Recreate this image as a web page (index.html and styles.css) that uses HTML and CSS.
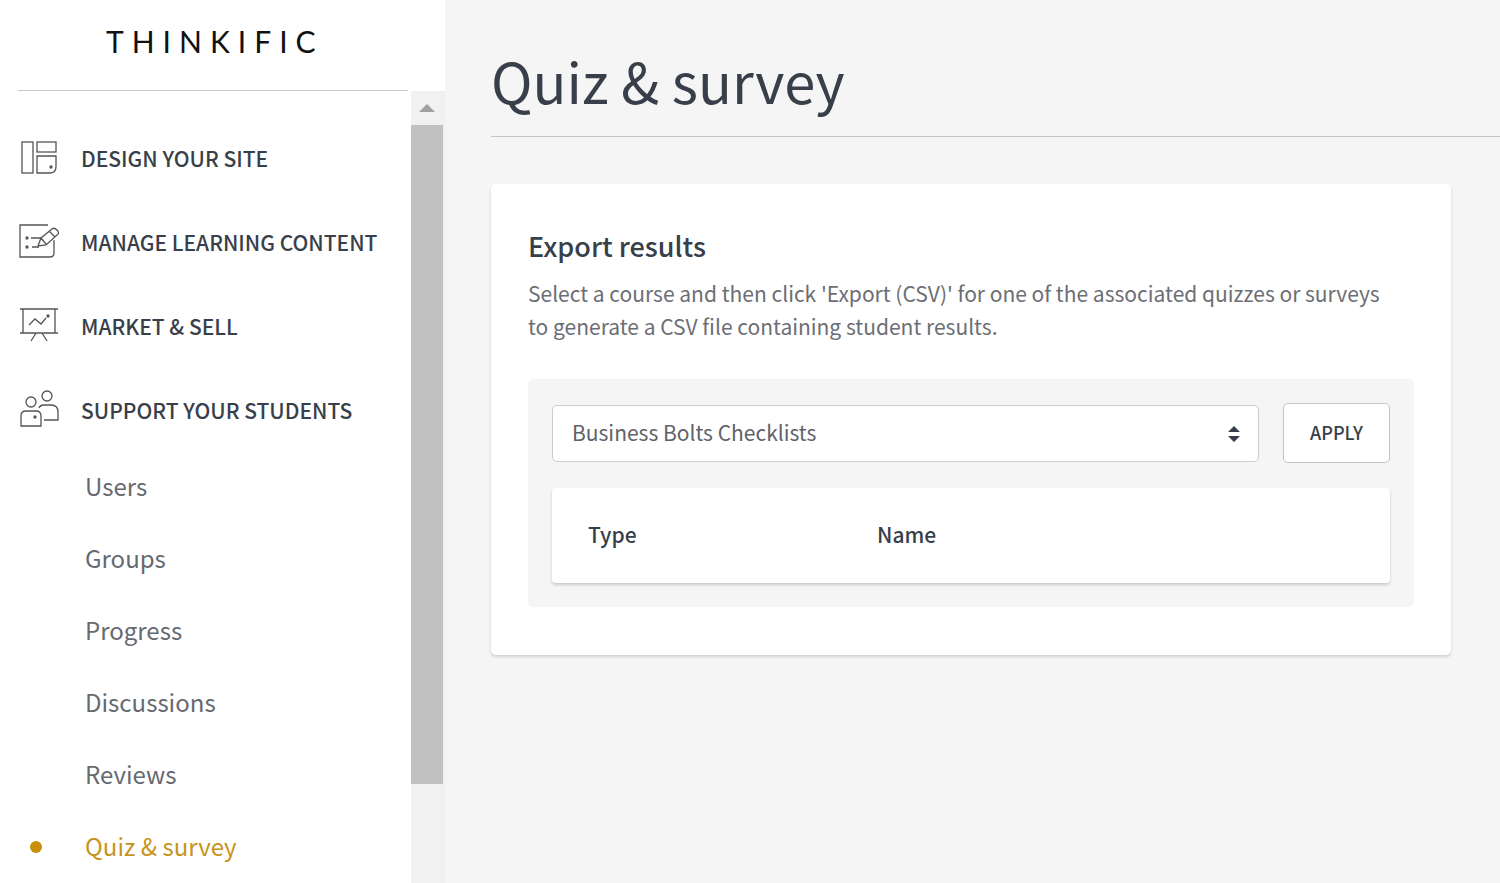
FILE: index.html
```html
<!DOCTYPE html>
<html lang="en">
<head>
    <meta charset="utf-8">
    <title>Quiz &amp; survey</title>
    <link rel="stylesheet" href="styles.css">
</head>
<body>
    <aside class="sidebar">
        <div class="logo">THINKIFIC</div>
        <div class="sidebar-body">
            <nav class="menu">
                <a class="section" href="#design">
                    <svg class="icon" viewBox="0 0 42 42">
                        <rect x="4" y="5" width="11" height="31"/>
                        <rect x="19" y="5" width="19" height="10"/>
                        <path d="M19 19h19v10.500q0 6.500-6.500 6.500H19z"/>
                        <circle class="dot" cx="33" cy="30" r="1"/>
                    </svg>
                    Design your site
                </a>
                <a class="section" href="#manage">
                    <svg class="icon" viewBox="0 0 42 42">
                        <path d="M30 4H2v32h30q4 0 4-4V19"/>
                        <path d="M13 17h11M14 26h7"/>
                        <path d="M20 25l3-8L34 8q2-2 5 1t0 5L28 24l-8 1zM31 10l6 6M23 17l5 6"/>
                        <circle class="dot" cx="9" cy="17" r="1"/>
                        <circle class="dot" cx="9" cy="26" r="1"/>
                    </svg>
                    Manage learning content
                </a>
                <a class="section" href="#market">
                    <svg class="icon" viewBox="0 0 42 42">
                        <path d="M2 4h38M2 28h38M5 4v24M37 4v24M18 28l-5 8M24 28l5 8"/>
                        <path d="M11 20l6-6 6 5 5-6"/>
                        <circle class="dot" cx="30" cy="11" r="1"/>
                    </svg>
                    Market &amp; sell
                </a>
                <a class="section" href="#support">
                    <svg class="icon" viewBox="0 0 42 42">
                        <circle cx="13" cy="13" r="5"/>
                        <circle cx="29" cy="7" r="5"/>
                        <path d="M3 37V27q0-5 5-5h10q5 0 5 5v10z"/>
                        <path d="M21 19q1-3 5-3h7q7 0 7 7v8H26"/>
                        <circle class="dot" cx="17" cy="28" r="1"/>
                    </svg>
                    Support your students
                </a>
                <ul class="submenu">
                    <li><a href="#users">Users</a></li>
                    <li><a href="#groups">Groups</a></li>
                    <li><a href="#progress">Progress</a></li>
                    <li><a href="#discussions">Discussions</a></li>
                    <li><a href="#reviews">Reviews</a></li>
                    <li><a class="active" href="#quiz">Quiz &amp; survey</a></li>
                </ul>
            </nav>
            <div class="scrollbar">
                <div class="scroll-arrow"></div>
                <div class="scroll-thumb"></div>
            </div>
        </div>
    </aside>

    <main class="content">
        <h1>Quiz &amp; survey</h1>

        <section class="card">
            <h2>Export results</h2>
            <p>Select a course and then click 'Export (CSV)' for one of the associated quizzes or surveys to generate a CSV file containing student results.</p>

            <div class="panel">
                <form class="filter">
                    <div class="select-wrap">
                        <select id="course" aria-label="Course">
                            <option>Business Bolts Checklists</option>
                        </select>
                        <svg class="caret" viewBox="0 0 12 16">
                            <path d="M6 0l6 6H0zM6 16l6-6H0z"/>
                        </svg>
                    </div>
                    <button type="button">Apply</button>
                </form>

                <table>
                    <thead>
                        <tr>
                            <th class="col-type">Type</th>
                            <th>Name</th>
                        </tr>
                    </thead>
                </table>
            </div>
        </section>
    </main>
</body>
</html>
```
FILE: styles.css
```css
* {
    box-sizing: border-box;
}
body {
    margin: 0;
    display: flex;
    height: 100vh;
    overflow: hidden;
    font-family: "Noto Sans CJK SC", "Open Sans", sans-serif;
    background: #f5f5f5;
    color: #383f4a;
}
a {
    color: inherit;
    text-decoration: none;
}

/* sidebar */
.sidebar {
    flex: 0 0 445px;
    display: flex;
    flex-direction: column;
    background: #fff;
}
.logo {
    margin: 0 37px 0 18px;
    height: 91px;
    padding-left: 88px;
    border-bottom: 1px solid #c8c8c8;
    font-family: Lato, sans-serif;
    font-size: 30px;
    line-height: 82px;
    letter-spacing: 8px;
    color: #111;
}
.sidebar-body {
    flex: 1;
    display: flex;
    min-height: 0;
}
.menu {
    flex: 1;
    padding: 25px 0 0 18px;
    overflow: hidden;
}
.section {
    display: flex;
    align-items: center;
    gap: 21px;
    height: 84px;
    font-size: 21px;
    font-weight: 500;
    text-transform: uppercase;
    white-space: nowrap;
}
.icon {
    width: 42px;
    height: 42px;
    fill: none;
    stroke: #555;
    stroke-width: 1.3;
}
.dot {
    fill: #444;
}
.submenu {
    list-style: none;
    margin: -2px 0 0;
    padding: 0;
}
.submenu a {
    position: relative;
    display: block;
    padding-left: 67px;
    font-size: 24px;
    line-height: 72px;
    color: #666a70;
}
.submenu .active {
    color: #c7941c;
}
.submenu .active::before {
    content: "";
    position: absolute;
    left: 12px;
    top: 31px;
    width: 12px;
    height: 12px;
    border-radius: 50%;
    background: #c98f0c;
}
.scrollbar {
    flex: 0 0 34px;
    display: flex;
    flex-direction: column;
    padding-right: 2px;
    background: #f1f1f1;
}
.scroll-arrow {
    flex: 0 0 34px;
    display: flex;
    align-items: center;
    justify-content: center;
}
.scroll-arrow::before {
    content: "";
    border: 8px solid transparent;
    border-top: 0;
    border-bottom-color: #a0a0a0;
}
.scroll-thumb {
    height: 87%;
    margin-bottom: 99px;
    background: #c1c1c1;
}

/* page */
.content {
    flex: 1;
    padding-left: 46px;
}
h1 {
    margin: 0 0 47px;
    padding: 44px 0 20px;
    border-bottom: 1px solid #c4c4c4;
    font-size: 56px;
    font-weight: 400;
    line-height: 72px;
}
.card {
    margin-right: 49px;
    padding: 44px 37px 48px;
    background: #fff;
    border-radius: 5px;
    box-shadow: 0 2px 3px rgba(0, 0, 0, 0.15);
}
h2 {
    margin: 0 0 13px;
    font-size: 27px;
    font-weight: 500;
    line-height: 36px;
}
p {
    margin: 0;
    padding-right: 12px;
    font-size: 21px;
    line-height: 33px;
    color: #6b6e74;
}
.panel {
    margin-top: 36px;
    padding: 24px;
    background: #f5f5f5;
    border-radius: 5px;
}
.filter {
    display: flex;
    align-items: center;
    gap: 24px;
    margin-bottom: 25px;
}
.select-wrap {
    position: relative;
    flex: 1;
}
select {
    display: block;
    width: 100%;
    height: 57px;
    padding: 0 48px 2px 19px;
    border: 1px solid #ccc;
    border-radius: 5px;
    appearance: none;
    background: #fff;
    font-family: inherit;
    font-size: 21px;
    color: #5f6268;
}
.caret {
    position: absolute;
    right: 19px;
    top: 21px;
    width: 12px;
    height: 16px;
    fill: #363d49;
    pointer-events: none;
}
button {
    width: 107px;
    height: 60px;
    padding: 0 0 2px;
    border: 1px solid #c4c4c4;
    border-radius: 5px;
    background: #fff;
    font-family: inherit;
    font-size: 18px;
    font-weight: 500;
    text-transform: uppercase;
    color: #383f4a;
}
table {
    width: 100%;
    border-collapse: collapse;
    background: #fff;
    border-radius: 4px;
    box-shadow: 0 2px 3px rgba(0, 0, 0, 0.18);
}
th {
    height: 95px;
    padding: 0 0 4px 36px;
    font-size: 21px;
    font-weight: 500;
    text-align: left;
}
.col-type {
    width: 289px;
}
```
